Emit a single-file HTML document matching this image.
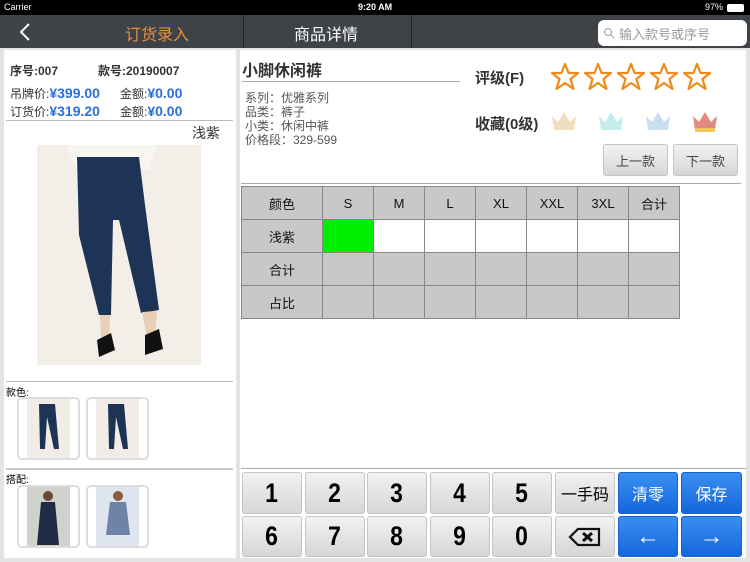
<!DOCTYPE html>
<html><head><meta charset="utf-8"><style>
*{margin:0;padding:0;box-sizing:border-box}
body{width:750px;height:562px;background:#e4e4e4;font-family:"Liberation Sans","Noto Sans CJK SC",sans-serif;position:relative;overflow:hidden}
.a{position:absolute}
.sb{left:0;top:0;width:750px;height:15px;background:#000;color:#fff;font-size:9px}
.nav{left:0;top:15px;width:750px;height:33px;background:#3f4247}
.key{position:absolute;border-radius:3px;background:linear-gradient(#f2f2f2,#d6d6d6);border:1px solid #c4c4c4;display:flex;align-items:center;justify-content:center;font-size:27px;font-weight:bold;color:#000}
.num{transform:scaleX(.85)}
.blue{background:linear-gradient(#3a8ef0,#1467dc);border-color:#1a62c8;color:#fff;font-size:16px;font-weight:normal}
table{border-collapse:collapse;position:absolute;left:241px;top:186px}
td{border:1px solid #888;height:33px;width:51px;text-align:center;font-size:13px;background:#c8c8c8;color:#111}
td.w{background:#fff}
.info{font-size:12px;color:#333}
.price{color:#2b6fd6;font-size:14px;font-weight:bold}
.thumb{position:absolute;width:63px;height:63px;border:2px solid #ddd;border-radius:5px;background:#fff;overflow:hidden}
</style></head><body>
<div class="a sb"><span class="a" style="left:4px;top:2px">Carrier</span><span class="a" style="left:358px;top:2px;font-weight:bold">9:20 AM</span><span class="a" style="left:705px;top:2px">97%</span><div class="a" style="left:727px;top:4px;width:17px;height:8px;background:#fff;border-radius:2px"></div></div>
<div class="a nav">
<svg class="a" style="left:18px;top:7px" width="14" height="20"><path d="M11 2 L3 10 L11 18" stroke="#fff" stroke-width="2" fill="none"/></svg>
<div class="a" style="left:125px;top:6px;color:#e8913a;font-size:16px">订货录入</div>
<div class="a" style="left:243px;top:0;width:1px;height:33px;background:#222"></div>
<div class="a" style="left:294px;top:6px;color:#fff;font-size:16px">商品详情</div>
<div class="a" style="left:411px;top:0;width:1px;height:33px;background:#222"></div>
<div class="a" style="left:598px;top:5px;width:149px;height:26px;background:#fff;border-radius:6px;color:#999;font-size:13px;padding:4px 0 0 21px">输入款号或序号</div>
<svg class="a" style="left:603px;top:12px" width="12" height="12"><circle cx="5" cy="5" r="3.5" stroke="#999" fill="none"/><path d="M8 8 L11 11" stroke="#999"/></svg>
</div>
<div class="a" style="left:4px;top:50px;width:232px;height:508px;background:#fff"></div>
<div class="a info" style="left:10px;top:62px;font-weight:bold">序号:007</div>
<div class="a info" style="left:98px;top:62px;font-weight:bold">款号:20190007</div>
<div class="a info" style="left:10px;top:85px">吊牌价:<span class="price">¥399.00</span></div>
<div class="a info" style="left:120px;top:85px">金额:<span class="price">¥0.00</span></div>
<div class="a info" style="left:10px;top:103px">订货价:<span class="price">¥319.20</span></div>
<div class="a info" style="left:120px;top:103px">金额:<span class="price">¥0.00</span></div>
<div class="a" style="left:6px;top:120px;width:227px;height:1px;background:#bbb"></div>
<div class="a" style="left:192px;top:123px;font-size:14px;color:#333">浅紫</div>
<svg class="a" style="left:37px;top:145px" width="164" height="220" viewBox="0 0 164 220">
<rect width="164" height="220" fill="#f3efe8"/>
<path d="M30 0 L120 0 L112 25 L40 25 Z" fill="#f8f6f1"/>
<path d="M40 12 L102 12 L108 60 L122 165 L104 168 L82 75 L76 75 L74 170 L62 170 L42 90 Z" fill="#1d3457"/>
<path d="M63 170 L73 170 L72 195 L64 195 Z" fill="#e9cfb6"/>
<path d="M105 167 L120 166 L118 190 L110 192 Z" fill="#e9cfb6"/>
<path d="M60 195 L74 188 L78 205 L62 212 Z" fill="#111"/>
<path d="M108 190 L122 184 L126 204 L108 210 Z" fill="#111"/>
</svg>
<div class="a" style="left:6px;top:381px;width:227px;height:1px;background:#bbb"></div>
<div class="a" style="left:6px;top:384px;font-size:10px">款色:</div>
<div class="thumb" style="left:17px;top:397px"><svg width="59" height="59"><rect x="8" width="43" height="59" fill="#f1ede6"/><path d="M20 5 L36 5 L40 50 L35 50 L28 18 L26 50 L21 50 Z" fill="#1d3457"/></svg></div>
<div class="thumb" style="left:86px;top:397px"><svg width="59" height="59"><rect x="8" width="43" height="59" fill="#f1ede6"/><path d="M20 5 L36 5 L40 50 L35 50 L28 18 L26 50 L21 50 Z" fill="#1d3457"/></svg></div>
<div class="a" style="left:6px;top:468px;width:227px;height:2px;background:#ccc"></div>
<div class="a" style="left:6px;top:471px;font-size:10px">搭配:</div>
<div class="thumb" style="left:17px;top:485px"><svg width="59" height="59"><rect x="8" width="43" height="59" fill="#cfd2cb"/><path d="M22 15 L36 15 L40 58 L18 58 Z" fill="#1f2b45"/><circle cx="29" cy="9" r="5" fill="#6b4a33"/></svg></div>
<div class="thumb" style="left:86px;top:485px"><svg width="59" height="59"><rect x="8" width="43" height="59" fill="#dfe5ee"/><path d="M22 15 L38 15 L42 48 L18 48 Z" fill="#6f82a8"/><circle cx="30" cy="9" r="5" fill="#8a5b3a"/></svg></div>
<div class="a" style="left:240px;top:50px;width:506px;height:508px;background:#fff"></div>
<div class="a" style="left:242px;top:57px;font-size:16px;font-weight:bold;color:#333">小脚休闲裤</div>
<div class="a" style="left:242px;top:81px;width:218px;height:1px;background:#aaa"></div>
<div class="a" style="left:245px;top:91px;font-size:12px;line-height:14px;color:#555">系列：优雅系列<br>品类：裤子<br>小类：休闲中裤<br>价格段：329-599</div>
<div class="a" style="left:475px;top:67px;font-size:15px;font-weight:bold;color:#333">评级(F)</div>
<svg class="a" style="left:550px;top:62px" width="165" height="32">
<g fill="none" stroke="#f08a1c" stroke-width="2.2" stroke-linejoin="round">
<path id="s" d="M15 2 L18.5 11 L28 11 L20.5 17 L23.5 27 L15 21 L6.5 27 L9.5 17 L2 11 L11.5 11 Z"/>
<use href="#s" x="33"/><use href="#s" x="66"/><use href="#s" x="99"/><use href="#s" x="132"/></g></svg>
<div class="a" style="left:475px;top:113px;font-size:15px;font-weight:bold;color:#333">收藏(0级)</div>
<svg class="a" style="left:550px;top:108px" width="170" height="28">
<g opacity=".6"><path d="M4 22 L2 8 L8 14 L14 4 L20 14 L26 8 L24 22 Z" fill="#e7c795"/><path d="M51 22 L49 8 L55 14 L61 4 L67 14 L73 8 L71 22 Z" fill="#9fe0e0"/><path d="M98 22 L96 8 L102 14 L108 4 L114 14 L120 8 L118 22 Z" fill="#a6c8ea"/></g>
<path d="M145 22 L143 8 L149 14 L155 4 L161 14 L167 8 L165 22 Z" fill="#e08a80"/><rect x="145" y="20" width="20" height="4" fill="#f2c55a"/></svg>
<div class="key" style="left:603px;top:144px;width:65px;height:32px;font-size:13px;font-weight:normal;color:#444">上一款</div>
<div class="key" style="left:673px;top:144px;width:65px;height:32px;font-size:13px;font-weight:normal;color:#444">下一款</div>
<div class="a" style="left:241px;top:183px;width:500px;height:1px;background:#aaa"></div>
<table>
<tr><td style="width:81px">颜色</td><td>S</td><td>M</td><td>L</td><td>XL</td><td>XXL</td><td>3XL</td><td>合计</td></tr>
<tr><td>浅紫</td><td style="background:#00ee00"></td><td class="w"></td><td class="w"></td><td class="w"></td><td class="w"></td><td class="w"></td><td class="w"></td></tr>
<tr><td>合计</td><td></td><td></td><td></td><td></td><td></td><td></td><td></td></tr>
<tr><td>占比</td><td></td><td></td><td></td><td></td><td></td><td></td><td></td></tr>
</table>
<div class="a" style="left:241px;top:468px;width:505px;height:1px;background:#aaa"></div>
<div class="key" style="left:242px;top:472px;width:60px;height:42px"><span class="num">1</span></div>
<div class="key" style="left:305px;top:472px;width:60px;height:42px"><span class="num">2</span></div>
<div class="key" style="left:367px;top:472px;width:60px;height:42px"><span class="num">3</span></div>
<div class="key" style="left:430px;top:472px;width:60px;height:42px"><span class="num">4</span></div>
<div class="key" style="left:492px;top:472px;width:60px;height:42px"><span class="num">5</span></div>
<div class="key" style="left:555px;top:472px;width:60px;height:42px;font-size:16px;font-weight:normal">一手码</div>
<div class="key blue" style="left:618px;top:472px;width:60px;height:42px">清零</div>
<div class="key blue" style="left:681px;top:472px;width:61px;height:42px">保存</div>
<div class="key" style="left:242px;top:516px;width:60px;height:41px"><span class="num">6</span></div>
<div class="key" style="left:305px;top:516px;width:60px;height:41px"><span class="num">7</span></div>
<div class="key" style="left:367px;top:516px;width:60px;height:41px"><span class="num">8</span></div>
<div class="key" style="left:430px;top:516px;width:60px;height:41px"><span class="num">9</span></div>
<div class="key" style="left:492px;top:516px;width:60px;height:41px"><span class="num">0</span></div>
<div class="key" style="left:555px;top:516px;width:60px;height:41px"><svg width="34" height="20"><path d="M10 2 L31 2 L31 18 L10 18 L2 10 Z" fill="none" stroke="#111" stroke-width="2.2"/><path d="M15 6 L24 14 M24 6 L15 14" stroke="#111" stroke-width="3"/></svg></div>
<div class="key blue" style="left:618px;top:516px;width:60px;height:41px;font-size:24px">←</div>
<div class="key blue" style="left:681px;top:516px;width:61px;height:41px;font-size:24px">→</div>
</body></html>
